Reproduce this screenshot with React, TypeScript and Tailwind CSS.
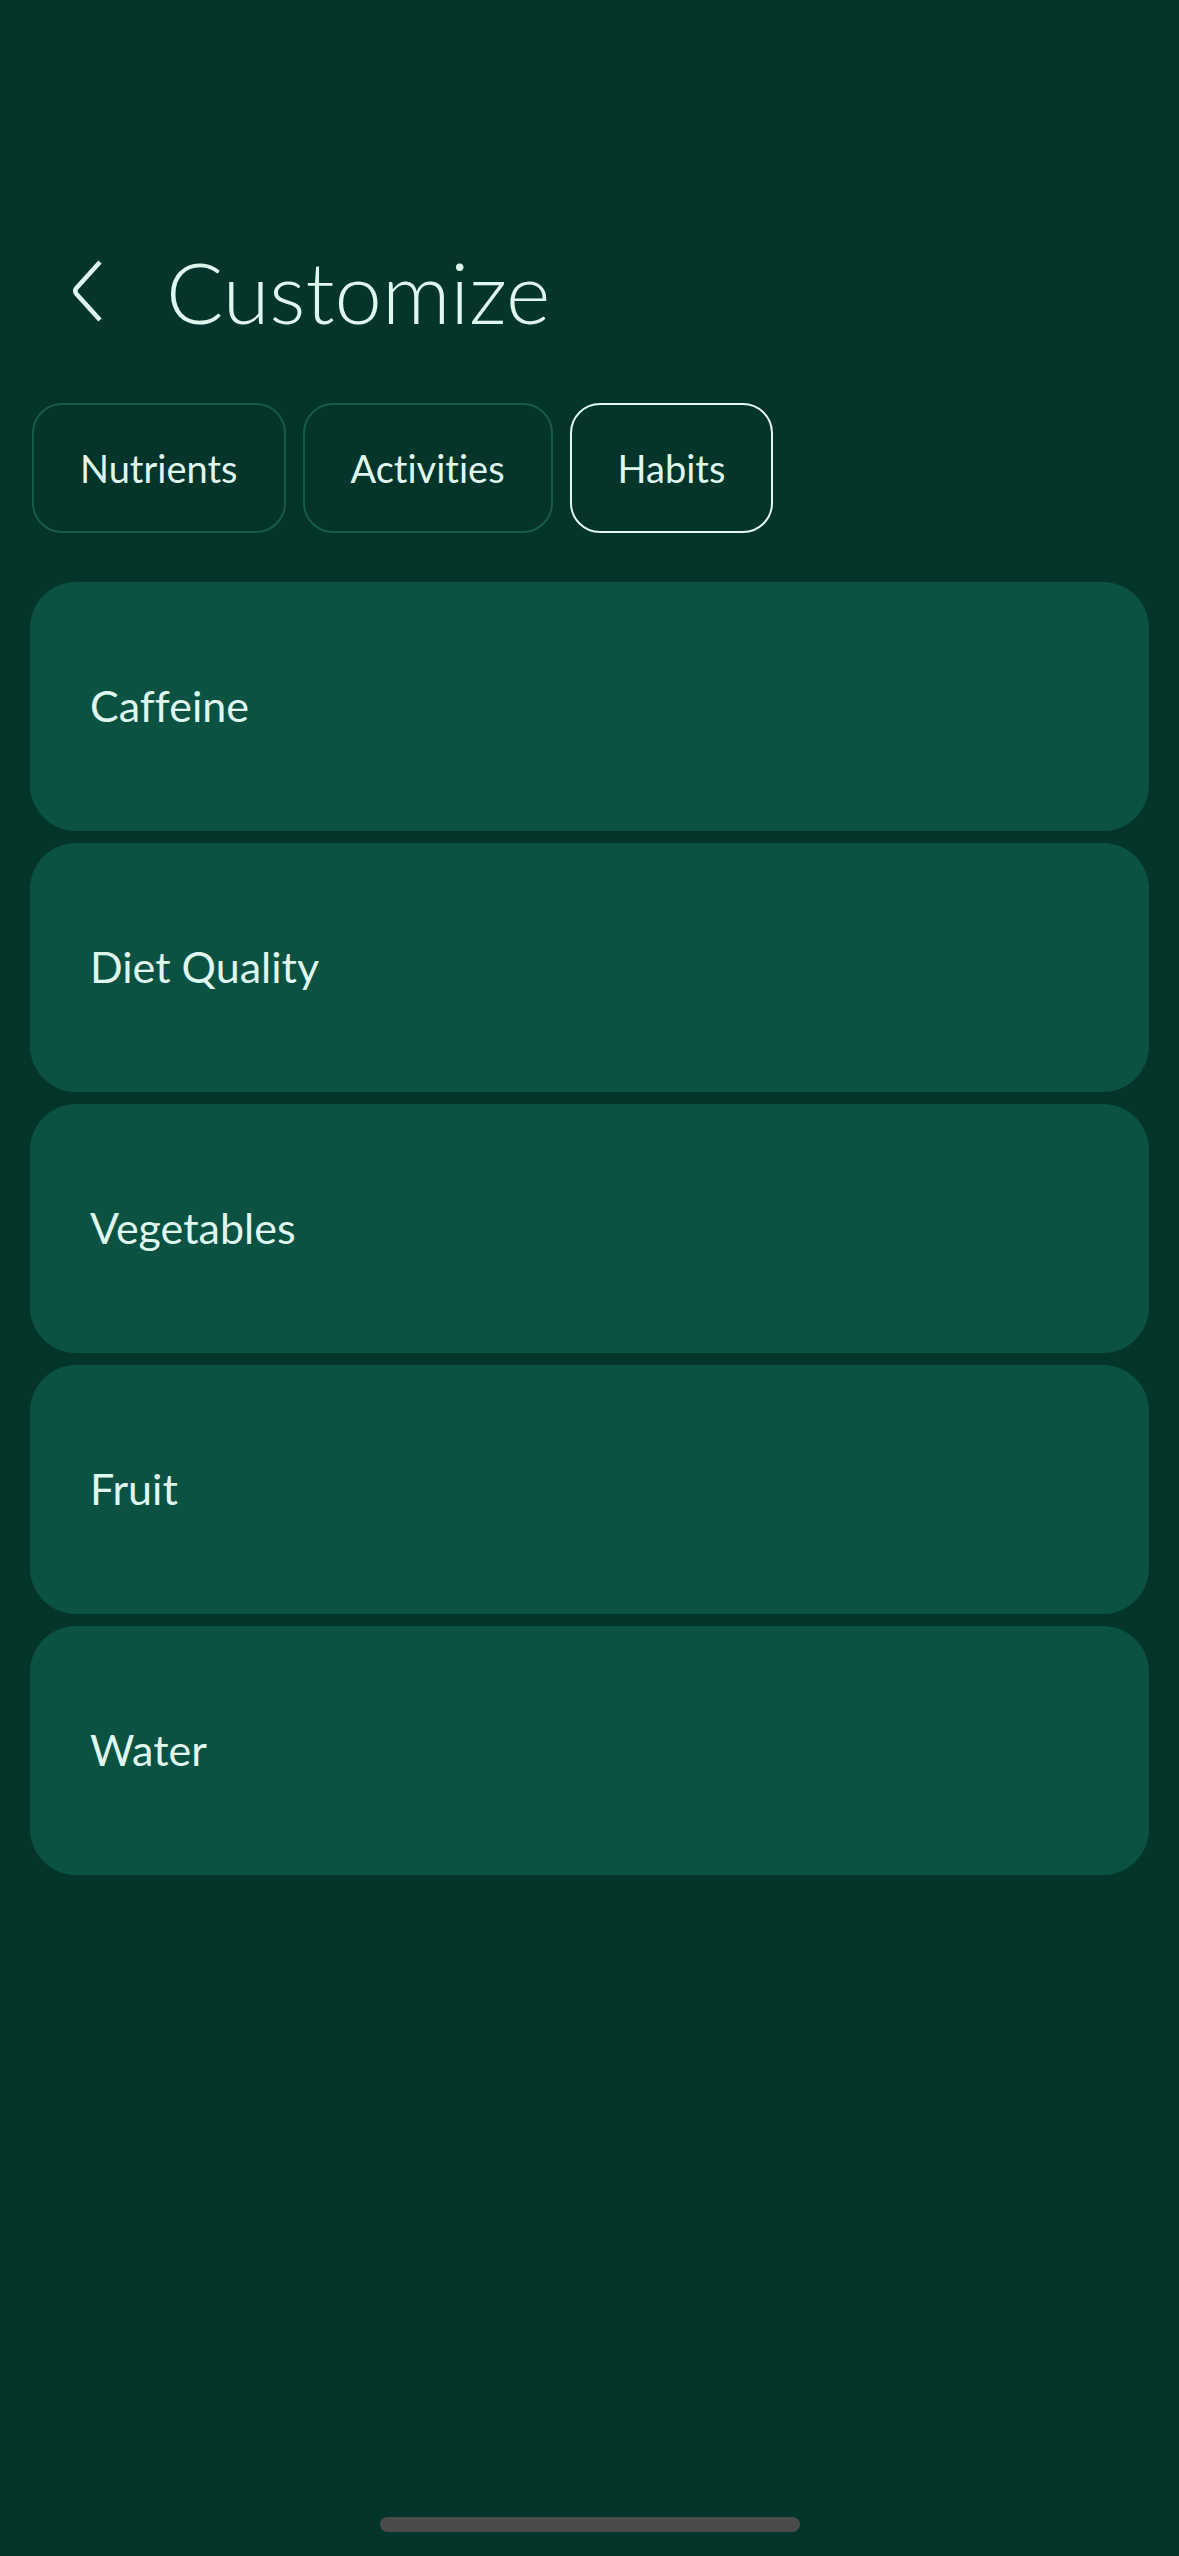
const tabs = [
  { label: "Nutrients", active: false },
  { label: "Activities", active: false },
  { label: "Habits", active: true },
];

const habits = ["Caffeine", "Diet Quality", "Vegetables", "Fruit", "Water"];

const App = () => {
  return (
    <div
      className="min-h-screen bg-[#04352b] text-[#dff7ef] flex flex-col [font-variant-ligatures:none]"
      style={{ fontFamily: "Lato, 'Noto Sans', sans-serif" }}
    >
      {/* Header */}
      <div className="flex items-center h-[100px] mt-[241px] pl-[70px]">
        <svg width="34" height="64" viewBox="0 0 34 64" fill="none" className="shrink-0">
          <path
            d="M30 3 L6.5 29 Q4 32 6.5 35 L30 61"
            stroke="#dff7ef"
            strokeWidth="4.5"
          />
        </svg>
        <h1 className="ml-[62px] text-[85px] font-light leading-none">Customize</h1>
      </div>

      {/* Tabs */}
      <div className="flex gap-[17px] mt-[62px] px-[32px]">
        {tabs.map((t) => (
          <button
            key={t.label}
            className={`h-[130px] px-[46px] rounded-[30px] border-[2.5px] text-[38px] font-normal bg-transparent ${
              t.active ? "border-[#e3f7f0]" : "border-[#185c47]"
            }`}
          >
            {t.label}
          </button>
        ))}
      </div>

      {/* Habit list */}
      <div className="flex flex-col gap-[12px] mt-[49px] px-[30px]">
        {habits.map((h) => (
          <div
            key={h}
            className="h-[249px] rounded-[46px] bg-[#0c5242] flex items-center pl-[60px] text-[43px] font-normal"
          >
            {h}
          </div>
        ))}
      </div>

      {/* Home indicator */}
      <div className="mt-auto mb-[24px] flex justify-center">
        <div className="w-[420px] h-[15px] rounded-full bg-[#4b4b4b]" />
      </div>
    </div>
  );
};

export default App;
